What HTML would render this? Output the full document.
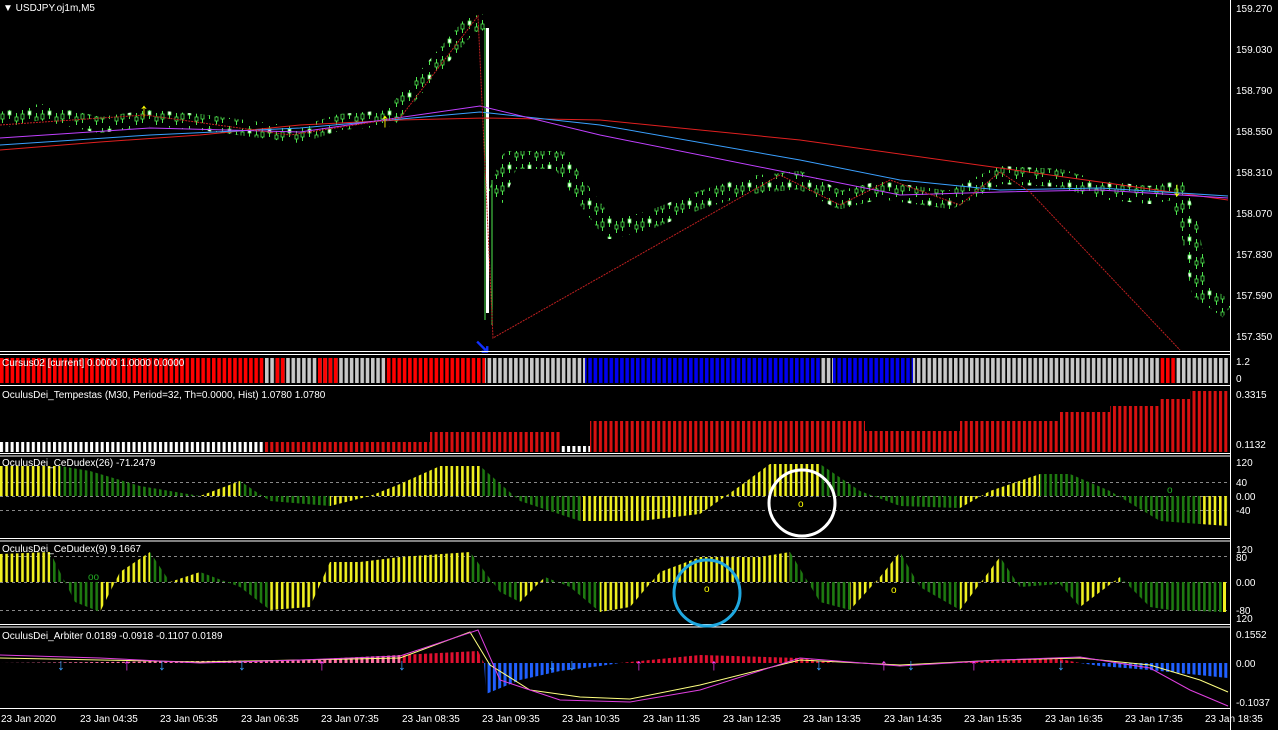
<!DOCTYPE html>
<html><head><meta charset="utf-8"><style>
html,body{margin:0;padding:0;background:#000;width:1278px;height:730px;overflow:hidden}
svg{display:block}
text{font-family:"Liberation Sans",sans-serif;font-size:10px;fill:#fff}
.y{fill:#ff0}
.ar text{font-size:16px;font-weight:bold}
.big{font-size:20px !important;font-weight:bold}
</style></head><body>
<svg width="1278" height="730" xmlns="http://www.w3.org/2000/svg">
<defs>
<pattern id="cr" patternUnits="userSpaceOnUse" width="5.3" height="40"><rect x="0" y="0" width="3.6" height="40" fill="#f00"/></pattern>
<pattern id="cg" patternUnits="userSpaceOnUse" width="5.3" height="40"><rect x="0" y="0" width="3.6" height="40" fill="#c8c8c8"/></pattern>
<pattern id="cb" patternUnits="userSpaceOnUse" width="5.3" height="40"><rect x="0" y="0" width="3.6" height="40" fill="#0000f0"/></pattern>
<pattern id="tw" patternUnits="userSpaceOnUse" width="5.3" height="80"><rect x="0" y="0" width="3" height="80" fill="#fff"/></pattern>
<pattern id="tr" patternUnits="userSpaceOnUse" width="5.3" height="80"><rect x="0" y="0" width="3" height="80" fill="#d81010"/></pattern>
<pattern id="py" patternUnits="userSpaceOnUse" width="5.3" height="200"><rect x="0" y="0" width="2.6" height="200" fill="#f0f020"/></pattern>
<pattern id="pg" patternUnits="userSpaceOnUse" width="5.3" height="200"><rect x="0" y="0" width="2.6" height="200" fill="#1e7a10"/></pattern>
<pattern id="ar" patternUnits="userSpaceOnUse" width="5.3" height="200"><rect x="0" y="0" width="3" height="200" fill="#e01030"/></pattern>
<pattern id="ak" patternUnits="userSpaceOnUse" width="5.3" height="200"><rect x="0" y="0" width="3" height="200" fill="#ff70a0"/></pattern>
<pattern id="ab" patternUnits="userSpaceOnUse" width="5.3" height="200"><rect x="0" y="0" width="3" height="200" fill="#2060ff"/></pattern>
<pattern id="pc" patternUnits="userSpaceOnUse" width="20" height="18">
<line x1="2.5" y1="2" x2="2.5" y2="15" stroke="#4ee84e"/><rect x="1" y="6" width="3" height="5" fill="#000" stroke="#4ee84e" stroke-width="0.8"/>
<line x1="9.5" y1="0" x2="9.5" y2="11" stroke="#4ee84e"/><rect x="8" y="3" width="3" height="4" fill="#fff" stroke="#4ee84e" stroke-width="0.8"/>
<line x1="16.5" y1="5" x2="16.5" y2="17" stroke="#4ee84e"/><rect x="15" y="9" width="3" height="4" fill="#000" stroke="#4ee84e" stroke-width="0.8"/>
</pattern>
</defs>
<rect width="1278" height="730" fill="#000"/>

<!-- main chart -->
<polyline fill="none" stroke="url(#pc)" stroke-width="16" stroke-linejoin="round" points="0,120 40,112 100,125 150,118 200,122 260,130 300,135 340,122 390,118 410,95 440,60 470,25 484,22"/>
<polyline fill="none" stroke="url(#pc)" stroke-width="18" stroke-linejoin="round" points="495,200 510,160 560,160 580,190 610,230 650,220 700,200 750,185 800,180 840,200 880,190 950,200 1000,175 1060,178 1100,190 1150,195 1178,190 1190,230 1200,290 1228,310"/>
<rect x="486" y="28" width="3" height="285" fill="#fff"/>
<line x1="485" y1="28" x2="485" y2="320" stroke="#4ee84e"/>
<line x1="492" y1="180" x2="492" y2="325" stroke="#4ee84e"/>
<polyline fill="none" stroke="#e02020" points="0,150 100,142 200,135 300,125 400,120 485,118 600,120 800,140 1000,168 1100,182 1228,200"/>
<polyline fill="none" stroke="#3aa0ff" points="0,145 150,135 300,128 480,112 600,125 800,160 900,180 1000,190 1100,188 1228,196"/>
<polyline fill="none" stroke="#c040ff" points="0,138 150,128 300,132 480,106 600,135 800,175 900,195 1000,192 1100,190 1228,198"/>
<polyline fill="none" stroke="#c02020" stroke-dasharray="2,1" points="0,125 145,115 290,135 400,118 478,16 493,338 780,175 840,205 890,180 960,205 1000,172 1030,192 1180,350"/>
<text x="139" y="117" class="big" style="fill:#ff0">↑</text>
<text x="380" y="127" class="big" style="fill:#ff0">↑</text>
<text x="1172" y="196" class="big" style="fill:#ff0">↓</text>
<text x="474" y="353" class="big" style="fill:#1030ff;font-size:24px">↘</text>
<text x="3" y="11">▼ USDJPY.oj1m,M5</text>

<!-- right axis -->
<line x1="1230.5" y1="0" x2="1230.5" y2="730" stroke="#fff"/>
<text x="1236" y="12">159.270</text><text x="1236" y="53">159.030</text><text x="1236" y="94">158.790</text><text x="1236" y="135">158.550</text><text x="1236" y="176">158.310</text><text x="1236" y="217">158.070</text><text x="1236" y="258">157.830</text><text x="1236" y="299">157.590</text><text x="1236" y="340">157.350</text>

<!-- separators -->
<g stroke="#fff">
<line x1="0" y1="351.5" x2="1231" y2="351.5"/><line x1="0" y1="354.5" x2="1231" y2="354.5"/>
<line x1="0" y1="385.5" x2="1231" y2="385.5"/>
<line x1="0" y1="453.5" x2="1231" y2="453.5"/><line x1="0" y1="456" x2="1231" y2="456"/>
<line x1="0" y1="538.5" x2="1231" y2="538.5"/><line x1="0" y1="541" x2="1231" y2="541"/>
<line x1="0" y1="624.5" x2="1231" y2="624.5"/><line x1="0" y1="627" x2="1231" y2="627"/>
<line x1="0" y1="708.5" x2="1231" y2="708.5"/>
</g>

<!-- Cursus -->
<rect x="0" y="358" width="265" height="25" fill="url(#cr)"/>
<rect x="265" y="358" width="80" height="25" fill="url(#cg)"/>
<rect x="275" y="358" width="10" height="25" fill="url(#cr)"/>
<rect x="318" y="358" width="20" height="25" fill="url(#cr)"/>
<rect x="345" y="358" width="40" height="25" fill="url(#cg)"/>
<rect x="385" y="358" width="100" height="25" fill="url(#cr)"/>
<rect x="485" y="358" width="100" height="25" fill="url(#cg)"/>
<rect x="585" y="358" width="235" height="25" fill="url(#cb)"/>
<rect x="820" y="358" width="13" height="25" fill="url(#cg)"/>
<rect x="833" y="358" width="80" height="25" fill="url(#cb)"/>
<rect x="913" y="358" width="247" height="25" fill="url(#cg)"/>
<rect x="1160" y="358" width="15" height="25" fill="url(#cr)"/>
<rect x="1175" y="358" width="53" height="25" fill="url(#cg)"/>
<text x="2" y="366">Cursus02 [current] 0.0000 1.0000 0.0000</text>
<text x="1236" y="365">1.2</text><text x="1236" y="382">0</text>

<!-- Tempestas -->
<rect x="0" y="442" width="265" height="10" fill="url(#tw)"/>
<rect x="265" y="442" width="165" height="10" fill="url(#tr)"/>
<rect x="430" y="432" width="130" height="20" fill="url(#tr)"/>
<rect x="560" y="446" width="30" height="6" fill="url(#tw)"/>
<rect x="590" y="421" width="275" height="31" fill="url(#tr)"/>
<rect x="865" y="431" width="95" height="21" fill="url(#tr)"/>
<rect x="960" y="421" width="100" height="31" fill="url(#tr)"/>
<rect x="1060" y="412" width="50" height="40" fill="url(#tr)"/>
<rect x="1110" y="406" width="50" height="46" fill="url(#tr)"/>
<rect x="1160" y="399" width="30" height="53" fill="url(#tr)"/>
<rect x="1190" y="391" width="38" height="61" fill="url(#tr)"/>
<text x="2" y="398">OculusDei_Tempestas (M30, Period=32, Th=0.0000, Hist) 1.0780 1.0780</text>
<text x="1236" y="398">0.3315</text><text x="1236" y="448">0.1132</text>

<!-- CeDudex 26 -->
<g stroke="#888" stroke-dasharray="3,3"><line x1="0" y1="482.5" x2="1230" y2="482.5"/><line x1="0" y1="496.5" x2="1230" y2="496.5"/><line x1="0" y1="510.5" x2="1230" y2="510.5"/></g>
<polygon fill="url(#py)" points="0,496 0,466 60,466 60,496"/>
<polygon fill="url(#pg)" points="60,496 60,466 90,471 140,486 200,496"/>
<polygon fill="url(#py)" points="200,496 240,481 240,496"/>
<polygon fill="url(#pg)" points="240,496 240,481 270,501 330,506 330,496"/>
<polygon fill="url(#py)" points="330,496 330,506 370,496 400,484 440,466 480,466 480,496"/>
<polygon fill="url(#pg)" points="480,496 480,466 520,501 580,521 580,496"/>
<polygon fill="url(#py)" points="580,496 580,521 640,521 700,514 740,486 770,464 820,464 820,496"/>
<polygon fill="url(#pg)" points="820,496 820,464 860,491 900,506 960,508 960,496"/>
<polygon fill="url(#py)" points="960,496 960,508 990,491 1040,474 1040,496"/>
<polygon fill="url(#pg)" points="1040,496 1040,474 1070,474 1110,491 1160,521 1200,524 1200,496"/>
<polygon fill="url(#py)" points="1200,496 1200,524 1228,526 1228,496"/>
<text x="2" y="466">OculusDei_CeDudex(26) -71.2479</text>
<text x="1236" y="466">120</text><text x="1236" y="486">40</text><text x="1236" y="500">0.00</text><text x="1236" y="514">-40</text>
<circle cx="802" cy="503" r="33" fill="none" stroke="#fff" stroke-width="3"/>
<text x="798" y="507" class="y">o</text><text x="1167" y="493" style="fill:#2a2">o</text>

<!-- CeDudex 9 -->
<g stroke="#888" stroke-dasharray="3,3"><line x1="0" y1="556.5" x2="1230" y2="556.5"/><line x1="0" y1="582.5" x2="1230" y2="582.5"/><line x1="0" y1="610.5" x2="1230" y2="610.5"/></g>
<polygon fill="url(#py)" points="0,582 0,554 50,552 50,582"/>
<polygon fill="url(#pg)" points="50,582 50,552 75,602 100,612 100,582"/>
<polygon fill="url(#py)" points="100,582 100,612 120,572 150,552 150,582"/>
<polygon fill="url(#pg)" points="150,582 150,552 170,582"/>
<polygon fill="url(#py)" points="170,582 200,572 200,582"/>
<polygon fill="url(#pg)" points="200,582 200,572 240,587 270,610 270,582"/>
<polygon fill="url(#py)" points="270,582 270,610 310,607 330,562 360,562 400,557 470,552 470,582"/>
<polygon fill="url(#pg)" points="470,582 470,552 500,592 520,602 520,582"/>
<polygon fill="url(#py)" points="520,582 520,602 545,577 545,582"/>
<polygon fill="url(#pg)" points="545,582 545,577 570,587 600,612 600,582"/>
<polygon fill="url(#py)" points="600,582 600,612 630,607 660,572 700,557 760,557 790,552 790,582"/>
<polygon fill="url(#pg)" points="790,582 790,552 820,602 850,610 850,582"/>
<polygon fill="url(#py)" points="850,582 850,610 880,577 900,552 900,582"/>
<polygon fill="url(#pg)" points="900,582 900,552 920,587 960,610 960,582"/>
<polygon fill="url(#py)" points="960,582 960,610 1000,557 1000,582"/>
<polygon fill="url(#pg)" points="1000,582 1000,557 1020,587 1060,584 1080,607 1080,582"/>
<polygon fill="url(#py)" points="1080,582 1080,607 1120,577 1120,582"/>
<polygon fill="url(#pg)" points="1120,582 1120,577 1150,607 1170,610 1222,612 1222,582"/>
<rect x="1223" y="582" width="3" height="30" fill="#f0f020"/>
<text x="2" y="552">OculusDei_CeDudex(9) 9.1667</text>
<text x="1236" y="553">120</text><text x="1236" y="561">80</text><text x="1236" y="586">0.00</text><text x="1236" y="614">-80</text><text x="1236" y="622">120</text>
<circle cx="707" cy="593" r="33" fill="none" stroke="#1fa8e0" stroke-width="3"/>
<text x="704" y="592" class="y">o</text><text x="891" y="593" class="y">o</text><text x="88" y="580" style="fill:#2a2">oo</text>

<!-- Arbiter -->
<polygon fill="url(#ak)" points="0,663 200,661 300,660 400,655 400,663"/>
<polygon fill="url(#ar)" points="400,663 400,655 478,651 484,663"/>
<polygon fill="url(#ab)" points="484,663 486,694 520,680 560,671 600,666 620,663"/>
<polygon fill="url(#ar)" points="620,663 640,661 700,655 800,658 835,663"/>
<polygon fill="url(#ar)" points="950,663 1000,660 1060,659 1080,663"/>
<polygon fill="url(#ab)" points="1080,663 1100,666 1150,670 1228,678 1228,663"/>
<polyline fill="none" stroke="#ffff80" points="0,658 100,660 200,662 300,660 400,658 470,632 490,665 530,690 580,697 630,699 700,685 800,660 900,665 1000,660 1080,658 1150,665 1200,680 1228,692"/>
<polyline fill="none" stroke="#e040e0" points="0,655 100,658 200,663 300,660 400,656 478,630 500,680 560,700 630,702 700,690 800,658 900,666 1000,660 1080,657 1150,668 1190,690 1228,706"/>
<g class="ar">
<text x="57" y="670" style="fill:#3aa0ff">↓</text><text x="123" y="670" style="fill:#ff40ff">↑</text><text x="158" y="670" style="fill:#3aa0ff">↓</text><text x="238" y="670" style="fill:#3aa0ff">↓</text><text x="318" y="670" style="fill:#ff40ff">↑</text><text x="398" y="670" style="fill:#3aa0ff">↓</text><text x="548" y="670" style="fill:#3aa0ff">↓</text><text x="568" y="670" style="fill:#3aa0ff">↓</text><text x="635" y="670" style="fill:#ff40ff">↑</text><text x="710" y="670" style="fill:#ff40ff">↑</text><text x="815" y="670" style="fill:#3aa0ff">↓</text><text x="880" y="670" style="fill:#ff40ff">↑</text><text x="907" y="670" style="fill:#3aa0ff">↓</text><text x="970" y="670" style="fill:#ff40ff">↑</text><text x="1057" y="670" style="fill:#3aa0ff">↓</text>
</g>
<text x="2" y="639">OculusDei_Arbiter 0.0189 -0.0918 -0.1107 0.0189</text>
<text x="1236" y="638">0.1552</text><text x="1236" y="667">0.00</text><text x="1236" y="706">-0.1037</text>

<!-- time axis -->
<g>
<text x="1" y="722">23 Jan 2020</text><text x="80" y="722">23 Jan 04:35</text><text x="160" y="722">23 Jan 05:35</text><text x="241" y="722">23 Jan 06:35</text><text x="321" y="722">23 Jan 07:35</text><text x="402" y="722">23 Jan 08:35</text><text x="482" y="722">23 Jan 09:35</text><text x="562" y="722">23 Jan 10:35</text><text x="643" y="722">23 Jan 11:35</text><text x="723" y="722">23 Jan 12:35</text><text x="803" y="722">23 Jan 13:35</text><text x="884" y="722">23 Jan 14:35</text><text x="964" y="722">23 Jan 15:35</text><text x="1045" y="722">23 Jan 16:35</text><text x="1125" y="722">23 Jan 17:35</text><text x="1205" y="722">23 Jan 18:35</text>
</g>
</svg>
</body></html>
